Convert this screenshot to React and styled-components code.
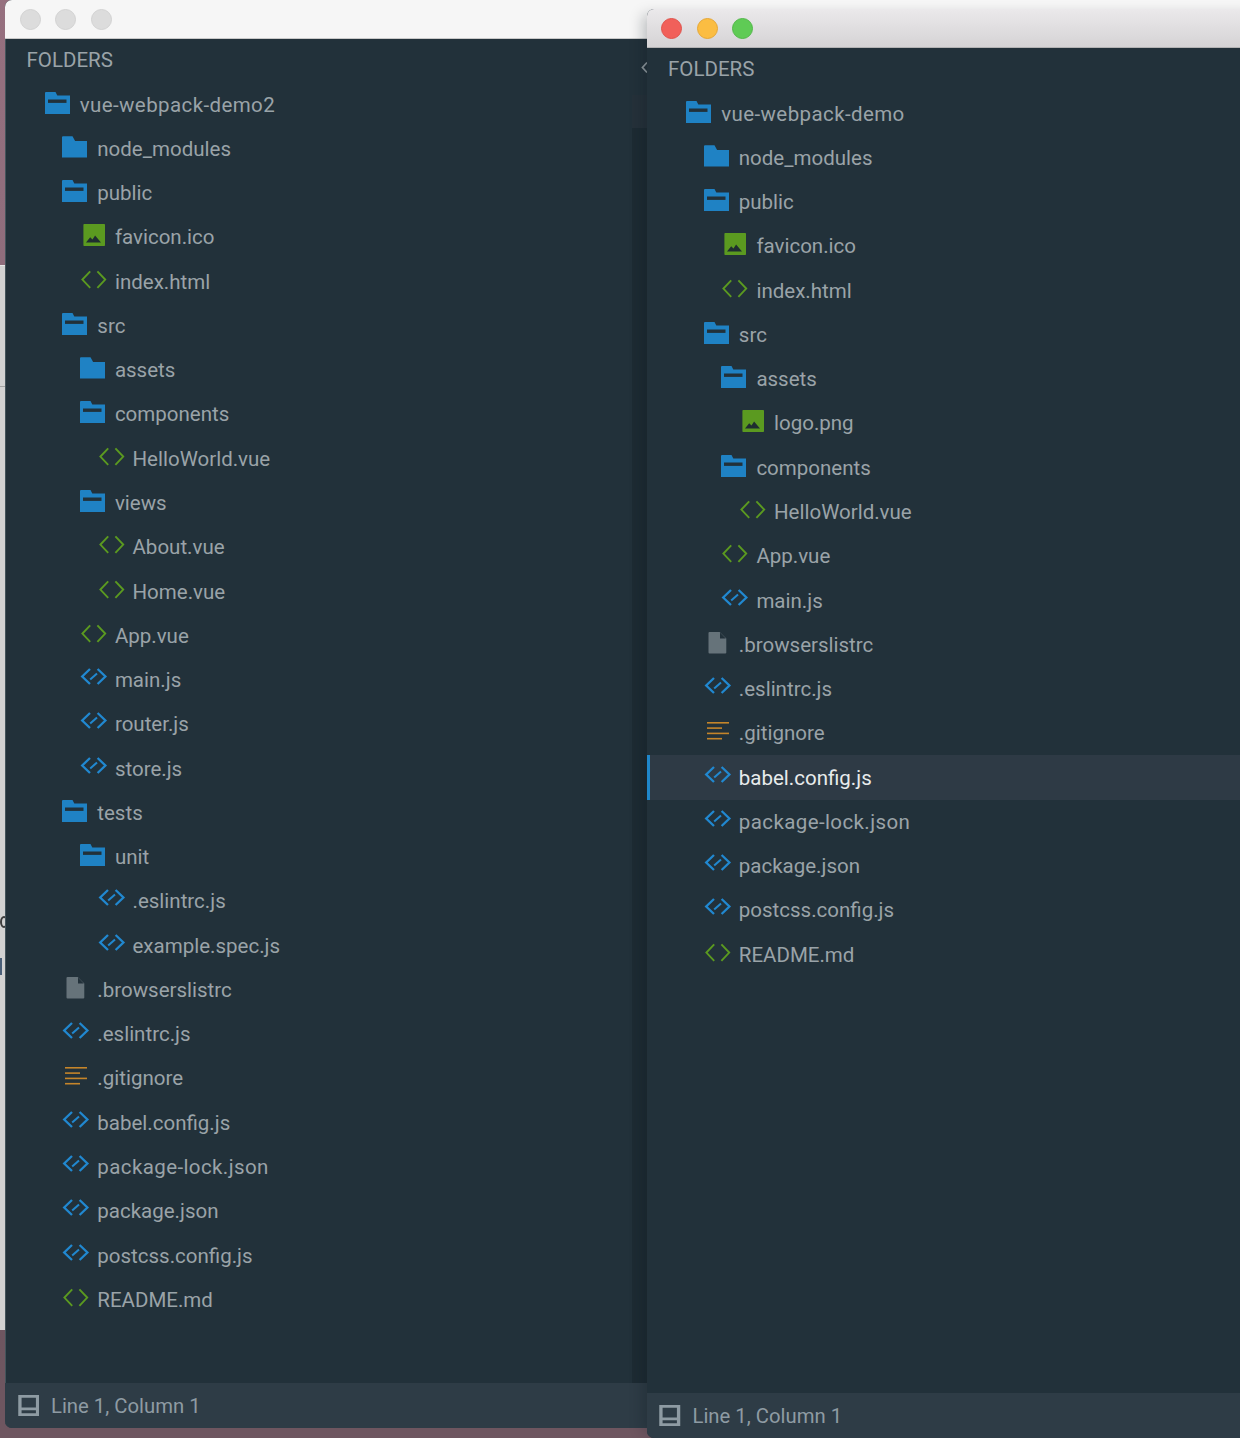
import React from "react";
import styled, { createGlobalStyle } from "styled-components";

const GlobalStyle = createGlobalStyle`
  html, body {
    margin: 0;
    padding: 0;
    background: #8f6d7c;
  }
`;

const Desktop = styled.div`
  position: relative;
  width: 1240px;
  height: 1438px;
  overflow: hidden;
  background: linear-gradient(to bottom, #96707f 0, #8f6d7c 265px, #6e5560 1000px, #6e5660 100%);
  font-family: Roboto, "Liberation Sans", sans-serif;
`;

const PageBehind = styled.div`
  position: absolute;
  left: 0;
  top: 265px;
  width: 5px;
  height: 1064px;
  background: #d2d2d2;
  border-top: 1px solid #e8e8e8;
`;

const PageRule = styled.div`
  position: absolute;
  left: 0;
  top: 120px;
  width: 5px;
  height: 1px;
  background: #a3a3a3;
`;

const PageArc = styled.div`
  position: absolute;
  left: 0;
  top: 650px;
  width: 8px;
  height: 12px;
  box-sizing: border-box;
  border: 2px solid #3d3d3d;
  border-radius: 50%;
`;

const PageBar = styled.div`
  position: absolute;
  left: 0;
  top: 692px;
  width: 2px;
  height: 17px;
  background: #4a5f78;
`;

const Window = styled.div`
  position: absolute;
  left: ${p => p.$left}px;
  top: ${p => p.$top}px;
  width: ${p => p.$width}px;
  height: ${p => p.$height}px;
  display: flex;
  flex-direction: column;
  background: #22313a;
  border-radius: 7px 0 0 7px;
  overflow: hidden;
  box-shadow: ${p =>
    p.$front
      ? "-10px 0 14px -6px rgba(10, 20, 26, 0.25)"
      : "inset 1px 0 0 #44545b"};
`;

const TitleBar = styled.div`
  flex: none;
  height: 39px;
  display: flex;
  align-items: center;
  gap: 14.5px;
  padding: 0 0 0 14.5px;
  box-sizing: border-box;
  border-bottom: 1px solid ${p => (p.$active ? "#b4b3b4" : "#c9c9c9")};
  background: ${p =>
    p.$active
      ? "linear-gradient(to bottom, #ebe9eb, #d5d3d5)"
      : "#f6f6f6"};
`;

const Light = styled.span`
  width: 21px;
  height: 21px;
  border-radius: 50%;
  box-sizing: border-box;
  background: ${p => p.$color};
  border: 1px solid ${p => p.$edge};
`;

const Sidebar = styled.div`
  flex: 1;
  min-height: 0;
`;

const Heading = styled.div`
  height: 43.5px;
  line-height: 43px;
  padding-left: 21.5px;
  font-size: 20.5px;
  color: #9aa3a8;
`;

const Row = styled.div`
  height: 44.27px;
  display: flex;
  align-items: center;
  box-sizing: border-box;
  padding-left: ${p => 39.7 + p.$depth * 17.6 - (p.$selected ? 3 : 0)}px;
  font-size: 20.5px;
  letter-spacing: ${p => (p.$hyphen ? "0.4px" : "0")};
  color: ${p => (p.$selected ? "#e8ebec" : "#9aa3a8")};
  background: ${p => (p.$selected ? "#2e3a45" : "transparent")};
  border-left: ${p => (p.$selected ? "3px solid #1f87cb" : "none")};
`;

const IconSlot = styled.svg`
  flex: none;
  width: 28px;
  height: 24px;
  margin: -4px 7px 0 0;
`;

const StatusBar = styled.div`
  flex: none;
  height: 45.5px;
  display: flex;
  align-items: center;
  gap: 12px;
  padding: 1px 0 0 12.5px;
  box-sizing: border-box;
  background: #2e3c46;
  font-size: 20.3px;
  color: #8e9ba3;
`;

const StatusIcon = styled.svg`
  flex: none;
  width: 21.5px;
  height: 21px;
`;

const Chevron = styled.svg`
  position: absolute;
  left: 641px;
  top: 61px;
  width: 7px;
  height: 13px;
`;

const ScrollShade = styled.div`
  position: absolute;
  left: 632px;
  top: ${p => p.$top}px;
  width: 15px;
  height: ${p => p.$height}px;
  background: ${p => p.$color};
`;

const FolderOpen = () => (
  <>
    <path d="M0 2a1 1 0 0 1 1-1h9.5l1.8 3.4H25V23H0z" fill="#1f82c4" />
    <rect x="3" y="8.5" width="18.5" height="3.4" fill="#22313a" />
  </>
);

const FolderClosed = () => (
  <path d="M0 2.3a1 1 0 0 1 1-1h9.5l2.6 4.7H25V22.6H0z" fill="#1f82c4" />
);

const ImageIcon = () => (
  <>
    <rect x="3.4" y="1" width="21.6" height="22" rx="0.8" fill="#5b9a20" />
    <path d="M6 19.5l4.2-5.2 2.3 2.2 2.6-4 5.9 7z" fill="#1f2e30" />
  </>
);

const GreenBrackets = () => (
  <g fill="none" stroke="#5b9a20" strokeWidth="1.9">
    <path d="M10.2 3.4L2.4 11.6l7.8 8.2" />
    <path d="M17.4 3.4l7.8 8.2-7.8 8.2" />
  </g>
);

const BlueBrackets = () => (
  <g fill="none" stroke="#2188d0" strokeWidth="2.3">
    <path d="M10 3L2.2 10.5l7.8 7.5" />
    <path d="M17.6 3l7.8 7.5-7.8 7.5" />
    <path d="M10.2 13.4l6.8-6" strokeWidth="2" />
  </g>
);

const FileIcon = () => (
  <>
    <path d="M4.5 2a1 1 0 0 1 1-1h10.2l6.6 6.6V21.5a1 1 0 0 1-1 1H5.5a1 1 0 0 1-1-1z" fill="#66737a" />
    <path d="M16 1.6l5.8 5.8H16z" fill="#22313a" />
  </>
);

const LinesIcon = () => (
  <g stroke="#c5852a" strokeWidth="1.6">
    <path d="M3 3.8h22" />
    <path d="M3 9.1h15" />
    <path d="M3 14.4h22" />
    <path d="M3 19.7h15" />
  </g>
);

const icons = {
  open: <FolderOpen />,
  closed: <FolderClosed />,
  image: <ImageIcon />,
  html: <GreenBrackets />,
  js: <BlueBrackets />,
  file: <FileIcon />,
  lines: <LinesIcon />
};

const backTree = [
  [0, "open", "vue-webpack-demo2"],
  [1, "closed", "node_modules"],
  [1, "open", "public"],
  [2, "image", "favicon.ico"],
  [2, "html", "index.html"],
  [1, "open", "src"],
  [2, "closed", "assets"],
  [2, "open", "components"],
  [3, "html", "HelloWorld.vue"],
  [2, "open", "views"],
  [3, "html", "About.vue"],
  [3, "html", "Home.vue"],
  [2, "html", "App.vue"],
  [2, "js", "main.js"],
  [2, "js", "router.js"],
  [2, "js", "store.js"],
  [1, "open", "tests"],
  [2, "open", "unit"],
  [3, "js", ".eslintrc.js"],
  [3, "js", "example.spec.js"],
  [1, "file", ".browserslistrc"],
  [1, "js", ".eslintrc.js"],
  [1, "lines", ".gitignore"],
  [1, "js", "babel.config.js"],
  [1, "js", "package-lock.json"],
  [1, "js", "package.json"],
  [1, "js", "postcss.config.js"],
  [1, "html", "README.md"]
];

const frontTree = [
  [0, "open", "vue-webpack-demo"],
  [1, "closed", "node_modules"],
  [1, "open", "public"],
  [2, "image", "favicon.ico"],
  [2, "html", "index.html"],
  [1, "open", "src"],
  [2, "open", "assets"],
  [3, "image", "logo.png"],
  [2, "open", "components"],
  [3, "html", "HelloWorld.vue"],
  [2, "html", "App.vue"],
  [2, "js", "main.js"],
  [1, "file", ".browserslistrc"],
  [1, "js", ".eslintrc.js"],
  [1, "lines", ".gitignore"],
  [1, "js", "babel.config.js", true],
  [1, "js", "package-lock.json"],
  [1, "js", "package.json"],
  [1, "js", "postcss.config.js"],
  [1, "html", "README.md"]
];

const Tree = ({ items }) => (
  <Sidebar>
    <Heading>FOLDERS</Heading>
    {items.map(([depth, icon, name, selected]) => (
      <Row
        key={name + depth + icon}
        $depth={depth}
        $selected={selected}
        $hyphen={name.includes("-")}
      >
        <IconSlot viewBox="0 0 28 24">{icons[icon]}</IconSlot>
        {name}
      </Row>
    ))}
  </Sidebar>
);

const Status = () => (
  <StatusBar>
    <StatusIcon viewBox="0 0 22 22">
      <path d="M0 0h22v22H0z M3.5 3v10h15V3z M3.5 16v3h15v-3z" fill="#8e9ba3" fillRule="evenodd" />
    </StatusIcon>
    Line 1, Column 1
  </StatusBar>
);

const App = () => (
  <Desktop>
    <GlobalStyle />
    <PageBehind>
      <PageRule />
      <PageArc />
      <PageBar />
    </PageBehind>
    <Window $left={5} $top={0} $width={1260} $height={1428}>
      <TitleBar>
        <Light $color="#dcdcdc" $edge="#d2d2d2" />
        <Light $color="#dcdcdc" $edge="#d2d2d2" />
        <Light $color="#dcdcdc" $edge="#d2d2d2" />
      </TitleBar>
      <Tree items={backTree} />
      <Status />
    </Window>
    <ScrollShade $top={95} $height={33} $color="#25313a" />
    <ScrollShade $top={128} $height={1255} $color="#1d2b33" />
    <Chevron viewBox="0 0 7 13">
      <path d="M6 1.5L1.5 6.5l4.5 5" fill="none" stroke="#8e989d" strokeWidth="1.8" />
    </Chevron>
    <Window $left={646.5} $top={9} $width={620} $height={1429} $front>
      <TitleBar $active>
        <Light $color="#f1605a" $edge="#e0534c" />
        <Light $color="#fbbd42" $edge="#e6a735" />
        <Light $color="#5fcb55" $edge="#52b849" />
      </TitleBar>
      <Tree items={frontTree} />
      <Status />
    </Window>
  </Desktop>
);

export default App;
